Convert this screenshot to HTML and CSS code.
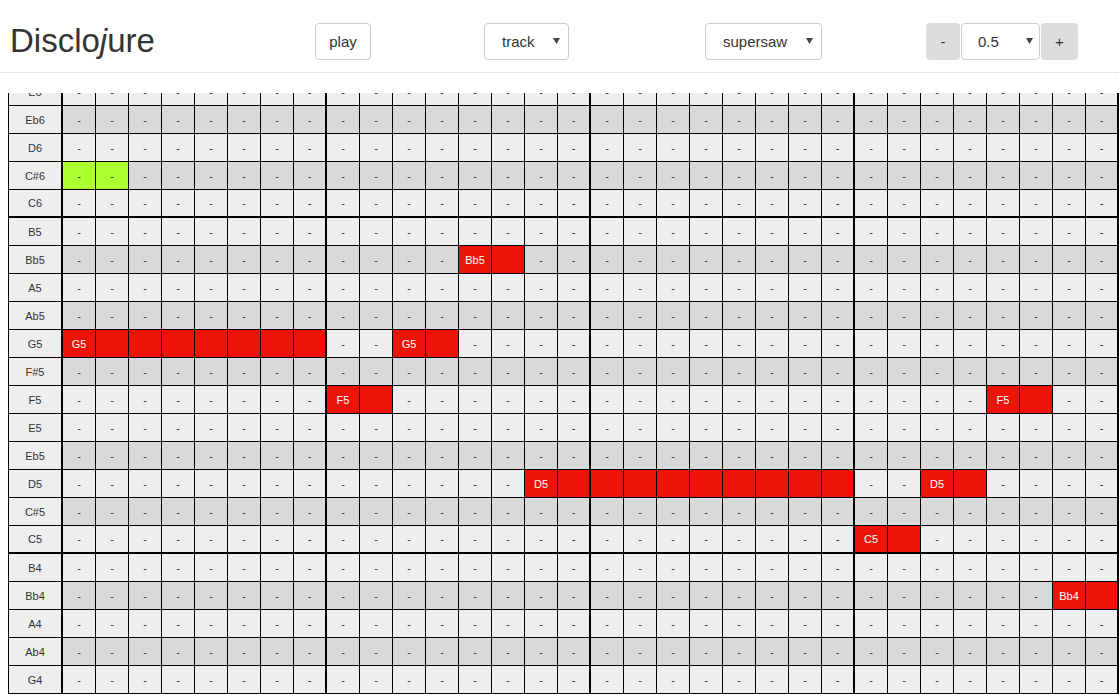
FILE: index.html
```html
<!DOCTYPE html>
<html>
<head>
<meta charset="utf-8">
<title>Disclojure</title>
<link rel="stylesheet" href="styles.css">
<script src="script.js" defer></script>
</head>
<body>
<header class="navbar">
  <h1 class="brand">Disclo<i>j</i>ure</h1>
  <button class="btn btn-play">play</button>
  <div class="select sel-track"><span>track</span><svg class="caret" width="7" height="6" viewBox="0 0 7 6"><path d="M0 0H7L3.5 6Z"/></svg></div>
  <div class="select sel-synth"><span>supersaw</span><svg class="caret" width="7" height="6" viewBox="0 0 7 6"><path d="M0 0H7L3.5 6Z"/></svg></div>
  <div class="zoom">
    <button class="btn-grey btn-minus">-</button>
    <div class="select sel-zoom"><span>0.5</span><svg class="caret" width="7" height="6" viewBox="0 0 7 6"><path d="M0 0H7L3.5 6Z"/></svg></div>
    <button class="btn-grey btn-plus">+</button>
  </div>
</header>
<main class="roll">
  <div class="grid" id="grid"></div>
</main>
</body>
</html>
```

FILE: styles.css
```css
html, body {
  margin: 0;
  padding: 0;
  background: #fff;
  overflow: hidden;
}
body {
  font-family: "Liberation Sans", Arial, sans-serif;
  color: #333;
}
.navbar {
  box-sizing: border-box;
  height: 73px;
  border-bottom: 1px solid #e7e7e7;
  display: flex;
  align-items: flex-start;
  padding: 23px 0 0 10px;
}
.brand {
  width: 305px;
  margin: -1px 0 0 0;
  font-size: 33px;
  font-weight: normal;
  line-height: 37px;
  color: #333;
  white-space: nowrap;
}
.btn, .btn-grey, .select {
  box-sizing: border-box;
  height: 37px;
  font-family: "Liberation Sans", Arial, sans-serif;
  font-size: 15px;
  color: #333;
  border-radius: 4px;
}
.btn {
  width: 56px;
  background: #fff;
  border: 1px solid #ccc;
  padding: 0;
}
.select {
  display: flex;
  align-items: center;
  justify-content: space-between;
  background: #fff;
  border: 1px solid #ccc;
  padding: 0 8px 0 17px;
}
.caret { fill: #444; display: block; margin-top: -1px; }
.sel-track { width: 85px; margin-left: 113px; }
.sel-synth { width: 117px; margin-left: 136px; }
.zoom {
  display: flex;
  gap: 1px;
  margin-left: 104px;
}
.btn-grey {
  background: #dddddd;
  border: none;
  padding: 0;
}
.btn-minus { width: 34px; }
.btn-plus { width: 37px; }
.sel-zoom { width: 79px; padding: 0 6px 0 16px; }

.roll {
  margin-top: 20px;
  height: 602px;
  overflow: hidden;
  padding-left: 8px;
}
.grid {
  margin-top: -15px;
  width: 1111px;
}
.row {
  display: flex;
}
.cell {
  box-sizing: border-box;
  flex: 0 0 auto;
  width: 33px;
  height: 28px;
  border-right: 1px solid #000;
  border-bottom: 1px solid #000;
  display: flex;
  align-items: center;
  justify-content: center;
  font-size: 11px;
  color: #333;
  background: #eeeeee;
  overflow: hidden;
  white-space: nowrap;
}
.label {
  width: 55px;
  border-left: 1px solid #000;
  border-right: 2px solid #000;
  background: #eeeeee;
}
.row.black .cell { background: #d9d9d9; }
.row.black .cell.label { background: #eeeeee; }
.row.octave .cell { border-bottom-width: 2px; }
.cell.bar-end { border-right-width: 2px; }
.row .cell.active { background: #adff2f; }
.row .cell.note { background: #ec1409; color: #fff; }
```

FILE: script.js
```js
(function () {
  var rows = ['E6','Eb6','D6','C#6','C6','B5','Bb5','A5','Ab5','G5','F#5','F5','E5','Eb5','D5','C#5','C5','B4','Bb4','A4','Ab4','G4'];
  var notes = {
    'Bb5': [[12, 2]],
    'G5': [[0, 8], [10, 2]],
    'F5': [[8, 2], [28, 2]],
    'D5': [[14, 10], [26, 2]],
    'C5': [[24, 2]],
    'Bb4': [[30, 2]]
  };
  var active = { 'C#6': [0, 1] };
  var grid = document.getElementById('grid');
  rows.forEach(function (name) {
    var row = document.createElement('div');
    row.className = 'row';
    if (name.indexOf('b') > 0 || name.indexOf('#') > 0) row.classList.add('black');
    if (name.charAt(0) === 'C' && name.charAt(1) !== '#') row.classList.add('octave');
    var label = document.createElement('div');
    label.className = 'cell label';
    label.textContent = name;
    row.appendChild(label);
    var spans = notes[name] || [];
    var act = active[name] || [];
    for (var c = 0; c < 32; c++) {
      var cell = document.createElement('div');
      cell.className = 'cell';
      if (c % 8 === 7) cell.classList.add('bar-end');
      var text = '-';
      for (var i = 0; i < spans.length; i++) {
        var s = spans[i];
        if (c >= s[0] && c < s[0] + s[1]) {
          cell.classList.add('note');
          text = c === s[0] ? name : '';
        }
      }
      if (act.indexOf(c) >= 0) cell.classList.add('active');
      cell.textContent = text;
      row.appendChild(cell);
    }
    grid.appendChild(row);
  });
})();
```
